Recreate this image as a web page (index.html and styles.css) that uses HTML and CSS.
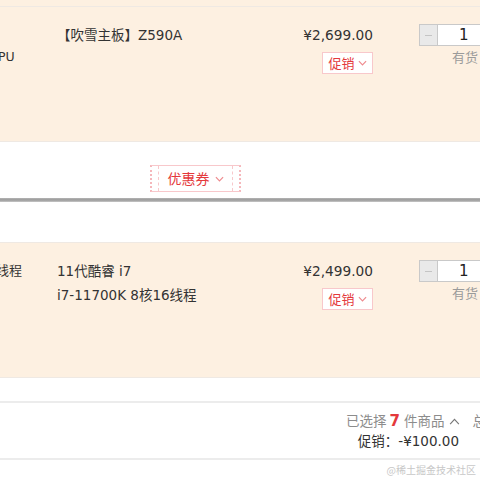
FILE: index.html
```html
<!DOCTYPE html>
<html lang="zh-CN">
<head>
<meta charset="utf-8">
<title>购物车</title>
<link rel="stylesheet" href="styles.css">
</head>
<body>
<div class="page">
  <div class="prev-item"></div>

  <div class="item">
    <div class="cell-left cell-left--second"><span class="left-text left-text--short">PU</span></div>
    <div class="cell-name">【吹雪主板】Z590A</div>
    <div class="cell-price">
      <div class="price">¥2,699.00</div>
      <div class="promo">促销<svg class="chev" viewBox="0 0 10 6" width="9" height="6"><polyline points="1,1 5,5 9,1"/></svg></div>
    </div>
    <div class="cell-qty">
      <div class="qty">
        <span class="qty-minus"><span class="minus-bar"></span></span>
        <span class="qty-input">1</span>
      </div>
      <div class="stock">有货</div>
    </div>
  </div>

  <div class="coupon-bar">
    <div class="coupon"><span class="coupon-inner">优惠券<svg class="chev" viewBox="0 0 10 6" width="9" height="6"><polyline points="1,1 5,5 9,1"/></svg></span></div>
  </div>
  <div class="shop-sep"></div>
  <div class="shop-gap"></div>

  <div class="item item--bordered">
    <div class="cell-left"><span class="left-text">线程</span></div>
    <div class="cell-name">11代酷睿 i7<br>i7-11700K 8核16线程</div>
    <div class="cell-price">
      <div class="price">¥2,499.00</div>
      <div class="promo">促销<svg class="chev" viewBox="0 0 10 6" width="9" height="6"><polyline points="1,1 5,5 9,1"/></svg></div>
    </div>
    <div class="cell-qty">
      <div class="qty">
        <span class="qty-minus"><span class="minus-bar"></span></span>
        <span class="qty-input">1</span>
      </div>
      <div class="stock">有货</div>
    </div>
  </div>

  <div class="footer-gap"></div>
  <div class="footer">
    <div class="selected"><span>已选择</span><b class="count">7</b><span>件商品</span><svg class="caret" viewBox="0 0 12 8" width="11" height="7"><polyline points="1,7 6,1.5 11,7"/></svg><span class="total">总价：</span></div>
    <div class="discount">促销：-¥100.00</div>
  </div>
  <div class="watermark">@稀土掘金技术社区</div>
</div>
</body>
</html>
```

FILE: styles.css
```css
html, body {
  margin: 0;
  padding: 0;
  background: #fff;
}
body {
  width: 480px;
  height: 480px;
  overflow: hidden;
  font-family: "DejaVu Sans", "Noto Sans CJK SC", sans-serif;
  color: #333;
}
.page {
  width: 480px;
}
.prev-item {
  height: 6px;
  background: #fdf0e1;
  border-bottom: 1px solid #efe9e3;
}
.item {
  display: flex;
  align-items: flex-start;
  height: 118px;
  padding-top: 16px;
  background: #fdf0e1;
  border-bottom: 1px solid #efe9e3;
  white-space: nowrap;
}
.item--bordered {
  border-top: 1px solid #efe9e3;
}
.cell-left {
  width: 57px;
  flex: none;
  font-size: 13px;
  line-height: 24px;
  overflow: hidden;
}
.left-text {
  display: inline-block;
  margin-left: -4px;
}
.left-text--short {
  margin-left: -2px;
  font-size: 12.5px;
}
.cell-left--second {
  margin-top: 22px;
}
.cell-name {
  width: 190px;
  flex: none;
  font-size: 13.5px;
  line-height: 24px;
  color: #333;
}
.cell-price {
  width: 126px;
  flex: none;
  display: flex;
  flex-direction: column;
  align-items: flex-end;
  margin-top: 2px;
}
.price {
  font-size: 13.7px;
  line-height: 20px;
  color: #333;
}
.promo {
  margin-top: 7px;
  height: 20px;
  width: 49px;
  box-sizing: content-box;
  border: 1px solid #f8c8cb;
  background: #fff;
  color: #e4393c;
  font-family: "Noto Sans CJK SC", sans-serif;
  font-size: 13px;
  line-height: 20px;
  display: flex;
  align-items: center;
  justify-content: center;
  gap: 3px;
}
.chev {
  flex: none;
  fill: none;
  stroke: #ee8a8e;
  stroke-width: 1.3;
}
.cell-qty {
  margin-left: 46px;
  margin-top: 1px;
  flex: none;
}
.qty {
  display: flex;
  height: 22px;
}
.qty-minus {
  width: 17px;
  height: 20px;
  background: #e9e9e9;
  border: 1px solid #c9c9c9;
  display: flex;
  align-items: center;
  justify-content: center;
}
.minus-bar {
  width: 7px;
  height: 1px;
  background: #c4c4c4;
}
.qty-input {
  width: 60px;
  height: 20px;
  background: #fff;
  border: 1px solid #c9c9c9;
  border-left: none;
  font-size: 15px;
  line-height: 20px;
  padding-left: 21px;
  box-sizing: content-box;
  color: #222;
}
.stock {
  margin-left: 33px;
  margin-top: 1px;
  font-family: "Noto Sans CJK SC", sans-serif;
  font-size: 13px;
  line-height: 20px;
  color: #9a9a9a;
}
.coupon-bar {
  height: 56px;
  padding-top: 23px;
  padding-left: 150px;
  box-sizing: border-box;
  background: #fff;
}
.coupon {
  display: inline-block;
  height: 25px;
  width: 75px;
  border-top: 1px solid #f8c8cb;
  border-bottom: 1px solid #f8c8cb;
  border-left: 2px dotted #f5b7bb;
  border-right: 2px dotted #f5b7bb;
  padding: 0 6px;
  box-sizing: content-box;
}
.coupon-inner {
  display: flex;
  align-items: center;
  justify-content: center;
  gap: 5px;
  height: 25px;
  border-left: 1px dashed #f8c8cb;
  border-right: 1px dashed #f8c8cb;
  color: #e4393c;
  font-family: "Noto Sans CJK SC", sans-serif;
  font-size: 14px;
  line-height: 25px;
}
.shop-sep {
  height: 4px;
  background: linear-gradient(#b4b4b4, #9a9a9a 50%, #c8c8c8);
}
.shop-gap {
  height: 40px;
}
.footer-gap {
  height: 23px;
}
.footer {
  border-top: 2px solid #ececec;
  border-bottom: 2px solid #ececec;
  padding-top: 8px;
  box-sizing: content-box;
  height: 47px;
  font-family: "DejaVu Sans", "Noto Sans CJK SC", sans-serif;
  white-space: nowrap;
}
.selected {
  margin-left: 346px;
  font-size: 13.5px;
  line-height: 20px;
  color: #8c8c8c;
  display: flex;
  align-items: center;
}
.selected > * {
  flex: none;
}
.count {
  color: #e4393c;
  font-size: 15px;
  margin: 0 4px 0 3px;
}
.caret {
  fill: none;
  stroke: #777;
  stroke-width: 1.3;
  margin-left: 5px;
}
.total {
  margin-left: 12px;
  color: #8c8c8c;
}
.discount {
  text-align: right;
  padding-right: 21px;
  font-size: 13.5px;
  line-height: 20px;
  color: #333;
}
.watermark {
  text-align: right;
  padding-right: 4px;
  padding-top: 2px;
  font-family: "Noto Sans CJK SC", sans-serif;
  font-size: 10px;
  line-height: 16px;
  color: #c8c8c8;
}
```
